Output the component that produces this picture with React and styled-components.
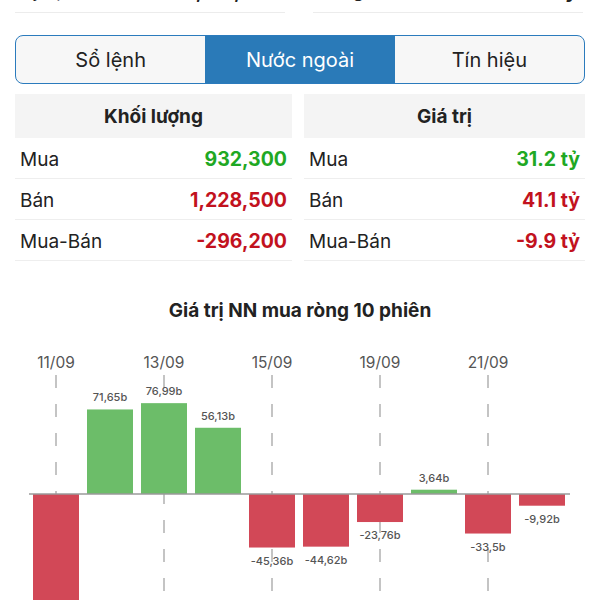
import React from "react";
import styled, { createGlobalStyle } from "styled-components";

const Global = createGlobalStyle`
  html, body { margin: 0; padding: 0; background: #fff; overflow: hidden; }
  body { font-family: Inter, "Noto Sans", "Liberation Sans", sans-serif; color: #222; }
  * { box-sizing: border-box; }
`;

const Page = styled.div`
  width: 600px;
  display: flex;
  flex-direction: column;
`;

const TopRow = styled.div`
  margin-top: -31px;
  display: grid;
  grid-template-columns: 270px 270px;
  justify-content: space-between;
  padding: 0 17px 0 15px;
`;

const TopCell = styled.div`
  height: 44px;
  display: flex;
  align-items: center;
  justify-content: space-between;
  padding: 0 6px;
  font-size: 19px;
  border-bottom: 1px solid #ececec;
`;

const Segmented = styled.div`
  margin: 22px 15px 0;
  height: 49px;
  display: grid;
  grid-template-columns: repeat(3, 1fr);
  border: 1.5px solid #2b7bbd;
  border-radius: 8px;
  overflow: hidden;
  background: #f7f7f7;
`;

const Segment = styled.div`
  display: flex;
  align-items: center;
  justify-content: center;
  font-size: 20px;
  color: ${(p) => (p.$active ? "#fff" : "#222")};
  background: ${(p) => (p.$active ? "#2a7ab8" : "transparent")};
`;

const Tables = styled.div`
  margin: 10px 15px 0;
  display: grid;
  grid-template-columns: 277px 281px;
  justify-content: space-between;
`;

const Table = styled.div`
  display: flex;
  flex-direction: column;
`;

const Header = styled.div`
  height: 44px;
  background: #f4f4f4;
  display: flex;
  align-items: center;
  justify-content: center;
  font-size: 19px;
  font-weight: 700;
  color: #222;
`;

const Row = styled.div`
  height: 41px;
  display: flex;
  align-items: center;
  justify-content: space-between;
  padding: 2px 5px 0 5px;
  border-bottom: 1px solid #eeeeee;
  font-size: 19px;
`;

const Label = styled.span`
  color: #222;
`;

const Value = styled.span`
  font-weight: 700;
  font-size: 19.5px;
  color: ${(p) =>
    p.$tone === "up" ? "#1fa824" : p.$tone === "down" ? "#c2121e" : "#222"};
`;

const ChartTitle = styled.div`
  margin-top: 38px;
  text-align: center;
  font-size: 19px;
  font-weight: 700;
  color: #222;
  line-height: 24px;
`;

const ChartBox = styled.div`
  margin-top: 18px;
  height: 270px;
`;

const volume = [
  { l: "Mua", v: "932,300", t: "up" },
  { l: "Bán", v: "1,228,500", t: "down" },
  { l: "Mua-Bán", v: "-296,200", t: "down" },
];
const value = [
  { l: "Mua", v: "31.2 tỷ", t: "up" },
  { l: "Bán", v: "41.1 tỷ", t: "down" },
  { l: "Mua-Bán", v: "-9.9 tỷ", t: "down" },
];

const bars = [
  { v: -120, label: "-120,4b" },
  { v: 71.65, label: "71,65b" },
  { v: 76.99, label: "76,99b" },
  { v: 56.13, label: "56,13b" },
  { v: -45.36, label: "-45,36b" },
  { v: -44.62, label: "-44,62b" },
  { v: -23.76, label: "-23,76b" },
  { v: 3.64, label: "3,64b" },
  { v: -33.5, label: "-33,5b" },
  { v: -9.92, label: "-9,92b" },
];
const dates = [
  { i: 0, d: "11/09" },
  { i: 2, d: "13/09" },
  { i: 4, d: "15/09" },
  { i: 6, d: "19/09" },
  { i: 8, d: "21/09" },
];

function Chart() {
  const axisY = 153;
  const k = 1.18;
  const cx = (i) => 56 + 54 * i;
  return (
    <svg width="600" height="270" viewBox="0 0 600 270">
      {dates.map((d) => (
        <g key={d.d}>
          <text
            x={cx(d.i)}
            y={27}
            textAnchor="middle"
            fontSize="15.5"
            fill="#555"
            fontFamily="Inter, 'Noto Sans', sans-serif"
          >
            {d.d}
          </text>
          <line
            x1={cx(d.i)}
            x2={cx(d.i)}
            y1={34}
            y2={270}
            stroke="#c4c4c4"
            strokeWidth="2"
            strokeDasharray="13 16"
          />
        </g>
      ))}
      {bars.map((b, i) => {
        const h = Math.abs(b.v) * k;
        const up = b.v >= 0;
        const y = up ? axisY - h : axisY;
        return (
          <g key={i}>
            <rect
              x={cx(i) - 23}
              y={y}
              width={46}
              height={h}
              fill={up ? "#6cbd69" : "#d24857"}
            />
            <text
              x={cx(i)}
              y={up ? y - 8 : y + h + 17}
              textAnchor="middle"
              fontSize="11"
              fontWeight="500"
              fill="#555"
              fontFamily="Inter, 'Noto Sans', sans-serif"
            >
              {b.label}
            </text>
          </g>
        );
      })}
      <line x1="29" x2="570" y1={axisY} y2={axisY} stroke="#9a9a9a" strokeWidth="1.5" />
    </svg>
  );
}

export default function App() {
  return (
    <Page>
      <Global />
      <TopRow>
        <TopCell>
          <Label>Tỷ lệ</Label>
          <Value>2,160,800</Value>
        </TopCell>
        <TopCell>
          <Label>Tổng</Label>
          <Value>72.3 tỷ</Value>
        </TopCell>
      </TopRow>
      <Segmented>
        <Segment>Sổ lệnh</Segment>
        <Segment $active>Nước ngoài</Segment>
        <Segment>Tín hiệu</Segment>
      </Segmented>
      <Tables>
        <Table>
          <Header>Khối lượng</Header>
          {volume.map((r) => (
            <Row key={r.l}>
              <Label>{r.l}</Label>
              <Value $tone={r.t}>{r.v}</Value>
            </Row>
          ))}
        </Table>
        <Table>
          <Header>Giá trị</Header>
          {value.map((r) => (
            <Row key={r.l}>
              <Label>{r.l}</Label>
              <Value $tone={r.t}>{r.v}</Value>
            </Row>
          ))}
        </Table>
      </Tables>
      <ChartTitle>Giá trị NN mua ròng 10 phiên</ChartTitle>
      <ChartBox>
        <Chart />
      </ChartBox>
    </Page>
  );
}
